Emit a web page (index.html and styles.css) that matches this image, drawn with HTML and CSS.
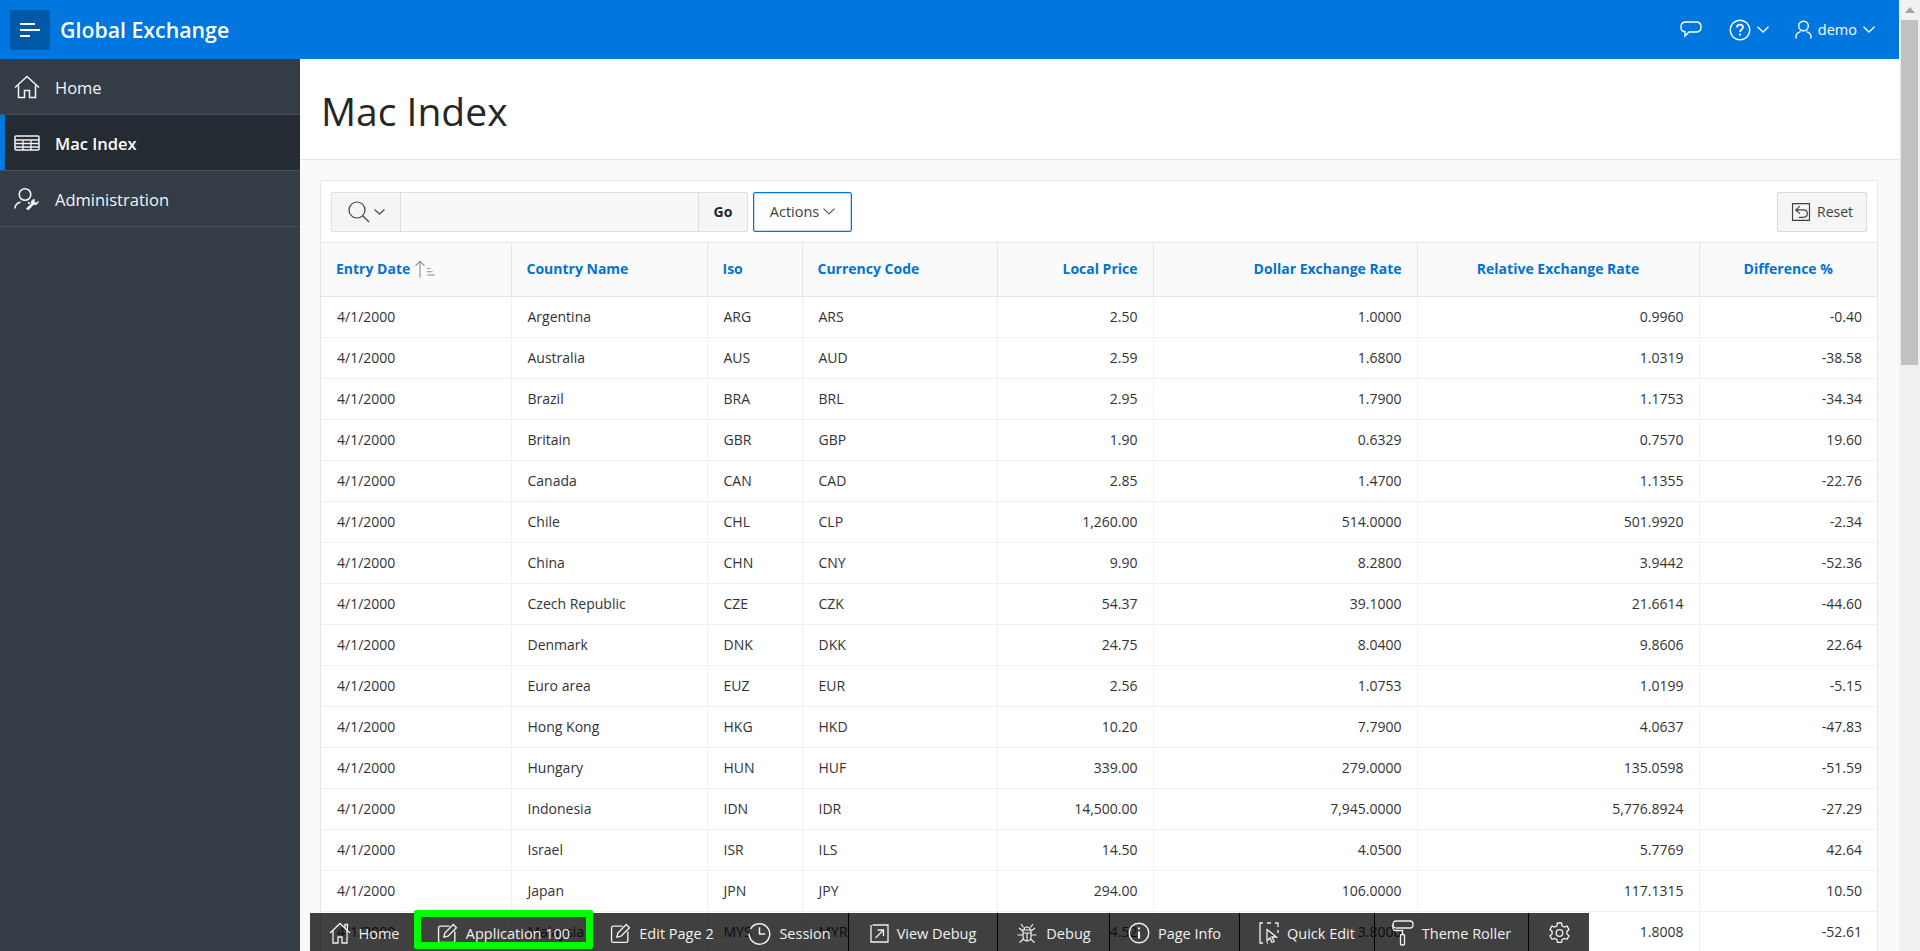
FILE: index.html
```html
<!DOCTYPE html>
<html lang="en">
<head>
    <meta charset="UTF-8">
    <meta name="viewport" content="width=device-width, initial-scale=1.0">
    <title>Mac Index</title>
    <link rel="stylesheet" href="styles.css">
</head>
<body>
<div class="viewport">
    <div class="app">
        <header class="topbar">
            <div class="topbar__left">
                <button class="menu-btn">
                    <svg width="20" height="14" viewBox="0 0 20 14" fill="none" stroke="#fff" stroke-width="2"><path d="M0 1h15M0 7h20M0 13h10"/></svg>
                </button>
                <span class="brand">Global Exchange</span>
            </div>
            <div class="topbar__right">
                <svg class="top-chat" width="22" height="20" viewBox="0 0 22 20" fill="none" stroke="#fff" stroke-width="1.4"><path d="M6 2h10c3 0 5 1.500 5 4.500v1c0 3-2 4.500-5 4.500H9l-4 4v-4.200C2.500 11.500 1 10 1 7.500v-1C1 3.500 3 2 6 2z"/></svg>
                <span class="top-group top-group--help">
                    <svg width="22" height="22" viewBox="0 0 22 22" fill="none" stroke="#fff" stroke-width="1.400"><circle cx="11" cy="11" r="9.800"/><path d="M8 8.500C8 6.700 9.300 5.700 11 5.700s3 1 3 2.600c0 2.200-3 2.300-3 4.700" stroke-width="1.800"/><path d="M11 14.600v2" stroke-width="1.900"/></svg>
                    <svg width="12" height="7" viewBox="0 0 12 7" fill="none" stroke="#fff" stroke-width="1.300"><path d="M.5.7 6 6l5.500-5.300"/></svg>
                </span>
                <span class="top-group top-group--user">
                    <svg width="17" height="19" viewBox="0 0 17 19" fill="none" stroke="#fff" stroke-width="1.400"><circle cx="8.500" cy="6" r="4.800"/><path d="M1 18.500v-2c0-2.500 2-4 4.500-4.800M16 18.500v-2c0-2.500-2-4-4.500-4.800"/></svg>
                    <span class="top-user">demo</span>
                    <svg width="12" height="7" viewBox="0 0 12 7" fill="none" stroke="#fff" stroke-width="1.300"><path d="M.5.7 6 6l5.500-5.300"/></svg>
                </span>
            </div>
        </header>

        <div class="body-wrap">
            <nav class="sidenav">
                <a class="nav-item">
                    <svg width="26" height="24" viewBox="0 0 26 24" fill="none" stroke="#f2f4f5" stroke-width="1.500"><path d="M1 12.500 13 1.500l12 11M4.500 10.500V22.500h6v-7h5v7h6V10.500"/></svg>
                    <span>Home</span>
                </a>
                <a class="nav-item nav-item--active">
                    <svg width="26" height="16" viewBox="0 0 26 16" fill="none" stroke="#f2f4f5" stroke-width="1.500"><rect x="1" y="1" width="24" height="14" rx="1"/><path d="M1 5h24M1 8.500h24M1 12h24M9 5v10M17 5v10" stroke-width="1.300"/></svg>
                    <span>Mac Index</span>
                </a>
                <a class="nav-item">
                    <svg width="26" height="24" viewBox="0 0 26 24" fill="none" stroke="#f2f4f5" stroke-width="1.500"><circle cx="11" cy="7.500" r="5.800"/><path d="M1 21.500c0-3 2-5.500 5.500-6.500M14 15.500l2 1"/><path d="M14.500 22.800l5-5.300c2 .8 4.500-.5 5-3l-2.500 1.500-2-1 .4-2.600c-2.400.2-3.800 2-3 4.300l-5 5z" fill="#f2f4f5" stroke-width=".8"/></svg>
                    <span>Administration</span>
                </a>
            </nav>

            <main class="content">
                <div class="page-head">
                    <h1>Mac Index</h1>
                </div>
                <div class="page-body">
                    <section class="report">
                        <div class="report__toolbar">
                            <div class="search-group">
                                <button class="search-btn">
                                    <svg width="22" height="22" viewBox="0 0 22 22" fill="none" stroke="#404040" stroke-width="1.200"><circle cx="9" cy="9" r="8"/><path d="m15 15 6 6"/></svg>
                                    <svg width="11" height="6" viewBox="0 0 11 6" fill="none" stroke="#404040" stroke-width="1.100"><path d="M.5.500 5.500 5l5-4.500"/></svg>
                                </button>
                                <div class="search-input"></div>
                                <button class="go-btn">Go</button>
                            </div>
                            <button class="actions-btn">Actions
                                <svg width="12" height="7" viewBox="0 0 13 7" fill="none" stroke="#404040" stroke-width="1.100"><path d="M.5.500 6.500 6l6-5.500"/></svg>
                            </button>
                            <button class="reset-btn">
                                <svg width="20" height="18" viewBox="0 0 18 17" fill="none" stroke="#404040" stroke-width="1.100"><path d="M2 .6h15v15.800H1V.6z"/><path d="M8 3 4 6.500 8 10M4 6.500h7c3 0 4 2 4 3.500s-1 3.500-4 3.500H7"/></svg>
                                Reset
                            </button>
                        </div>
                        <table class="grid">
                            <colgroup>
                                <col class="c-date"><col class="c-country"><col class="c-iso"><col class="c-code"><col class="c-price"><col class="c-rate"><col class="c-rel"><col class="c-diff">
                            </colgroup>
                            <thead>
                                <tr>
                                    <th>Entry Date
                                        <svg class="sort-icon" width="22" height="18" viewBox="0 0 20 16" fill="none" stroke="#8c8c8c" stroke-width="1"><path d="M5.500 16V1M1.500 5l4-4 4 4"/><path d="M12 7.500h3M12 10.500h5M12 13.500h7" stroke-width="1"/></svg>
                                    </th>
                                    <th>Country Name</th>
                                    <th>Iso</th>
                                    <th>Currency Code</th>
                                    <th class="right">Local Price</th>
                                    <th class="right">Dollar Exchange Rate</th>
                                    <th class="center">Relative Exchange Rate</th>
                                    <th class="center">Difference %</th>
                                </tr>
                            </thead>
                            <tbody>
                                <tr><td>4/1/2000</td><td>Argentina</td><td>ARG</td><td>ARS</td><td class="right">2.50</td><td class="right">1.0000</td><td class="right">0.9960</td><td class="right">-0.40</td></tr>
                                <tr><td>4/1/2000</td><td>Australia</td><td>AUS</td><td>AUD</td><td class="right">2.59</td><td class="right">1.6800</td><td class="right">1.0319</td><td class="right">-38.58</td></tr>
                                <tr><td>4/1/2000</td><td>Brazil</td><td>BRA</td><td>BRL</td><td class="right">2.95</td><td class="right">1.7900</td><td class="right">1.1753</td><td class="right">-34.34</td></tr>
                                <tr><td>4/1/2000</td><td>Britain</td><td>GBR</td><td>GBP</td><td class="right">1.90</td><td class="right">0.6329</td><td class="right">0.7570</td><td class="right">19.60</td></tr>
                                <tr><td>4/1/2000</td><td>Canada</td><td>CAN</td><td>CAD</td><td class="right">2.85</td><td class="right">1.4700</td><td class="right">1.1355</td><td class="right">-22.76</td></tr>
                                <tr><td>4/1/2000</td><td>Chile</td><td>CHL</td><td>CLP</td><td class="right">1,260.00</td><td class="right">514.0000</td><td class="right">501.9920</td><td class="right">-2.34</td></tr>
                                <tr><td>4/1/2000</td><td>China</td><td>CHN</td><td>CNY</td><td class="right">9.90</td><td class="right">8.2800</td><td class="right">3.9442</td><td class="right">-52.36</td></tr>
                                <tr><td>4/1/2000</td><td>Czech Republic</td><td>CZE</td><td>CZK</td><td class="right">54.37</td><td class="right">39.1000</td><td class="right">21.6614</td><td class="right">-44.60</td></tr>
                                <tr><td>4/1/2000</td><td>Denmark</td><td>DNK</td><td>DKK</td><td class="right">24.75</td><td class="right">8.0400</td><td class="right">9.8606</td><td class="right">22.64</td></tr>
                                <tr><td>4/1/2000</td><td>Euro area</td><td>EUZ</td><td>EUR</td><td class="right">2.56</td><td class="right">1.0753</td><td class="right">1.0199</td><td class="right">-5.15</td></tr>
                                <tr><td>4/1/2000</td><td>Hong Kong</td><td>HKG</td><td>HKD</td><td class="right">10.20</td><td class="right">7.7900</td><td class="right">4.0637</td><td class="right">-47.83</td></tr>
                                <tr><td>4/1/2000</td><td>Hungary</td><td>HUN</td><td>HUF</td><td class="right">339.00</td><td class="right">279.0000</td><td class="right">135.0598</td><td class="right">-51.59</td></tr>
                                <tr><td>4/1/2000</td><td>Indonesia</td><td>IDN</td><td>IDR</td><td class="right">14,500.00</td><td class="right">7,945.0000</td><td class="right">5,776.8924</td><td class="right">-27.29</td></tr>
                                <tr><td>4/1/2000</td><td>Israel</td><td>ISR</td><td>ILS</td><td class="right">14.50</td><td class="right">4.0500</td><td class="right">5.7769</td><td class="right">42.64</td></tr>
                                <tr><td>4/1/2000</td><td>Japan</td><td>JPN</td><td>JPY</td><td class="right">294.00</td><td class="right">106.0000</td><td class="right">117.1315</td><td class="right">10.50</td></tr>
                                <tr><td>4/1/2000</td><td>Malaysia</td><td>MYS</td><td>MYR</td><td class="right">4.52</td><td class="right">3.8000</td><td class="right">1.8008</td><td class="right">-52.61</td></tr>
                            </tbody>
                        </table>
                    </section>
                </div>
            </main>
        </div>

        <div class="devbar">
            <a class="dev-item dev-home">
                <svg width="22" height="22" viewBox="0 0 22 22" fill="none" stroke="#f0f0f0" stroke-width="1.300"><path d="M1 11 11 1.500 21 11M4 8.500V21h5v-6h4v6h5V8.500M16 6V2.500h2.500v6"/></svg>Home
            </a>
            <a class="dev-item dev-app">
                <svg width="21" height="21" viewBox="0 0 20 20" fill="none" stroke="#f0f0f0" stroke-width="1.300"><path d="M12 3H3a1.500 1.500 0 0 0-1.500 1.500v12.500a1.500 1.500 0 0 0 1.500 1.500h12.500a1.500 1.500 0 0 0 1.500-1.500V8"/><path d="M6.500 13.500l1-4L15.500 1.500l3 3-8 8z"/></svg>Application 100
                <span class="dev-highlight"></span>
            </a>
            <a class="dev-item dev-edit">
                <svg width="21" height="21" viewBox="0 0 20 20" fill="none" stroke="#f0f0f0" stroke-width="1.300"><path d="M12 3H3a1.500 1.500 0 0 0-1.500 1.500v12.500a1.500 1.500 0 0 0 1.500 1.500h12.500a1.500 1.500 0 0 0 1.500-1.500V8"/><path d="M6.500 13.500l1-4L15.500 1.500l3 3-8 8z"/></svg>Edit Page 2
            </a>
            <a class="dev-item dev-session">
                <svg width="23" height="23" viewBox="0 0 22 22" fill="none" stroke="#f0f0f0" stroke-width="1.400"><path d="M2.500 6.500A9.800 9.800 0 1 1 1.200 11"/><path d="M11 5v6.500h5.500"/></svg>Session
            </a>
            <a class="dev-item dev-view">
                <svg width="19" height="19" viewBox="0 0 19 19" fill="none" stroke="#f0f0f0" stroke-width="1.300"><path d="M2.500 1H18v17H1V1"/><path d="M5.500 14 13 6.500M7.500 6H13.500v6"/></svg>View Debug
            </a>
            <a class="dev-item dev-debug">
                <svg width="22" height="22" viewBox="0 0 22 22" fill="none" stroke="#f0f0f0" stroke-width="1.200"><path d="M7 8h8v7a4 4 0 0 1-8 0zM8 8c0-2 1.300-3 3-3s3 1 3 3M7 11h8M11 11v8M7.500 5.500 5 2M14.500 5.500 17 2M7 9 3 6M15 9l4-3M7 13H1.500M15 13h5.500M7.500 17 3.500 20.500M14.500 17l4 3.500"/></svg>Debug
            </a>
            <a class="dev-item dev-info">
                <svg width="22" height="22" viewBox="0 0 22 22" fill="none" stroke="#f0f0f0" stroke-width="1.400"><circle cx="11" cy="11" r="9.800"/><path d="M11 9.500v7" stroke-width="2"/><path d="M11 5.500v2" stroke-width="2"/></svg>Page Info
            </a>
            <a class="dev-item dev-quick">
                <svg width="20" height="22" viewBox="0 0 20 22" fill="none" stroke="#f0f0f0" stroke-width="1.300"><path d="M4 1H1v20h3M8 1h4M16 1h3v4M19 8v3M8 21h1"/><path d="M8 7.500 8 19l3-3 2 4.500 2.200-1L13 15h4.500z"/></svg>Quick Edit
            </a>
            <a class="dev-item dev-theme">
                <svg width="22" height="26" viewBox="0 0 22 26" fill="none" stroke="#f0f0f0" stroke-width="1.300"><rect x="1" y="1" width="20" height="7" rx="3"/><path d="M1 4.500c-.5 3 0 6 2 6h7.500v4"/><rect x="8.500" y="14.500" width="4" height="10.500" rx="1"/></svg>Theme Roller
            </a>
            <a class="dev-item dev-gear">
                <svg width="21" height="22" viewBox="0 0 21 22" fill="none" stroke="#f0f0f0" stroke-width="1.300"><circle cx="10.500" cy="11" r="3.300"/><path d="M8.500 1h4l.6 2.800 2.200 1.200 2.700-.9 2 3.400-2.100 1.900v2.500l2.100 2-2 3.400-2.700-.9-2.200 1.200-.6 2.800h-4l-.6-2.800-2.200-1.200-2.700.9-2-3.400 2.100-2V9.400L1 7.500l2-3.400 2.700.9L7.900 3.800z"/></svg>
            </a>
        </div>
    </div>

    <div class="scrollbar">
        <span class="scrollbar__arrow"></span>
        <div class="scrollbar__thumb"></div>
    </div>
</div>
</body>
</html>
```

FILE: styles.css
```css
*{
    box-sizing: border-box;
    padding: 0;margin: 0;
}
html, body{
    height: 100%;
    overflow: hidden;
}
body{
    font-family: "Open Sans", "Noto Sans", "DejaVu Sans", sans-serif;
    font-size: 14px;
    color: #262626;
    background: #fff;
}
button{
    font-family: inherit;
    cursor: pointer;
}
.viewport{
    display: flex;
    height: 951px;
}
.app{
    position: relative;
    flex: 1;
    min-width: 0;
    display: flex;
    flex-direction: column;
    overflow: hidden;
}

/* top bar */
.topbar{
    flex: 0 0 59px;
    display: flex;
    align-items: center;
    justify-content: space-between;
    background: #0076df;
    color: #fff;
    padding: 0 24px 0 10px;
}
.topbar__left{
    display: flex;
    align-items: center;
    gap: 10px;
}
.menu-btn{
    width: 40px;
    height: 40px;
    display: flex;
    align-items: center;
    justify-content: center;
    background: #0059a8;
    border: none;
    border-radius: 2px;
}
.brand{
    font-size: 21.300px;
    font-weight: 600;
}
.topbar__right{
    display: flex;
    align-items: center;
}
.top-chat{
    margin-right: 27px;
}
.top-group{
    display: flex;
    align-items: center;
}
.top-group--help{
    gap: 6px;
    margin-right: 26px;
}
.top-group--user{
    gap: 6px;
}
.top-user{
    font-size: 14.500px;
}

/* side nav */
.body-wrap{
    flex: 1;
    display: flex;
    min-height: 0;
}
.sidenav{
    flex: 0 0 300px;
    background: #343d46;
}
.nav-item{
    height: 56px;
    display: flex;
    align-items: center;
    gap: 15px;
    padding: 1px 14px 0;
    color: #f2f4f5;
    font-size: 16.500px;
    border-bottom: 1px solid #44505a;
}
.nav-item--active{
    background: #252b32;
    font-weight: 600;
    box-shadow: inset 5px 0 0 #0076df;
    color: #fff;
}

/* page */
.content{
    flex: 1;
    min-width: 0;
    display: flex;
    flex-direction: column;
}
.page-head{
    flex: 0 0 101px;
    display: flex;
    align-items: center;
    padding: 3px 21px 0;
    border-bottom: 1px solid #e6e6e6;
}
.page-head h1{
    font-size: 39px;
    font-weight: 400;
    color: #262626;
}
.page-body{
    flex: 1;
    background: #fafafa;
    padding: 20px 21px 0 20px;
}
.report{
    background: #fff;
    border: 1px solid #e6e6e6;
    border-radius: 2px;
}
.report__toolbar{
    display: flex;
    align-items: center;
    height: 61px;
    padding: 0 10px;
    gap: 5px;
}
.search-group{
    display: flex;
    width: 417px;
    height: 40px;
    background: #f5f5f5;
    border: 1px solid #dfdfdf;
    border-radius: 2px;
}
.search-btn{
    width: 69px;
    display: flex;
    align-items: center;
    justify-content: center;
    gap: 4px;
    background: #f5f5f5;
    border: none;
    border-right: 1px solid #dfdfdf;
}
.search-input{
    flex: 1;
    background: #f8f8f8;
}
.go-btn{
    width: 49px;
    background: #f5f5f5;
    border: none;
    border-left: 1px solid #dfdfdf;
    font-size: 14px;
    font-weight: 700;
    color: #262626;
}
.actions-btn{
    width: 99px;
    height: 40px;
    display: flex;
    align-items: center;
    justify-content: center;
    gap: 4px;
    background: #fff;
    border: 1px solid #0076df;
    box-shadow: inset 0 0 0 1px #bcdcf7;
    border-radius: 2px;
    font-size: 14.500px;
    color: #404040;
}
.reset-btn{
    margin-left: auto;
    width: 90px;
    height: 40px;
    display: flex;
    align-items: center;
    justify-content: center;
    gap: 6px;
    background: #f5f5f5;
    border: 1px solid #d9d9d9;
    border-radius: 2px;
    font-size: 14px;
    color: #404040;
}

/* report grid */
.grid{
    width: 100%;
    border-collapse: collapse;
    table-layout: fixed;
}
.c-date{width: 190px;}
.c-country{width: 196px;}
.c-iso{width: 95px;}
.c-code{width: 195px;}
.c-price{width: 156px;}
.c-rate{width: 264px;}
.c-rel{width: 282px;}
.grid th{
    height: 54px;
    background: #fafafa;
    border-top: 1px solid #e6e6e6;
    border-right: 1px solid #e6e6e6;
    border-bottom: 1px solid #e6e6e6;
    color: #0572ce;
    font-size: 14px;
    font-weight: 700;
    text-align: left;
    padding: 0 15px 2px;
    white-space: nowrap;
}
.grid td{
    height: 41px;
    border-right: 1px solid #f0f0f0;
    border-bottom: 1px solid #f0f0f0;
    font-size: 14px;
    color: #333;
    padding: 0 15px 2px 16px;
    white-space: nowrap;
}
.grid th:last-child, .grid td:last-child{
    border-right: none;
}
.grid .right{
    text-align: right;
}
.grid .center{
    text-align: center;
}
.sort-icon{
    vertical-align: -4px;
}

/* developer toolbar, floats over the report */
.devbar{
    position: absolute;
    left: 310px;
    bottom: 0;
    height: 38px;
    width: 1279px;
    display: flex;
    background: rgba(0, 0, 0, .75);
}
.dev-item{
    position: relative;
    display: flex;
    align-items: center;
    justify-content: center;
    gap: 8px;
    height: 100%;
    padding-top: 2px;
    border-right: 1px solid #000;
    color: #f0f0f0;
    font-size: 14.500px;
    white-space: nowrap;
}
.dev-home{width: 104px; padding-left: 4px;}
.dev-app{width: 179px;}
.dev-edit{width: 138px;}
.dev-session{width: 118px;}
.dev-view{width: 149px;}
.dev-debug{width: 112px;}
.dev-info{width: 130px;}
.dev-quick{width: 135px;}
.dev-theme{width: 154px;}
.dev-gear{width: 60px; border-right: none;}
.dev-home, .dev-app, .dev-edit{
    border-right: none;
}
.dev-highlight{
    position: absolute;
    top: -3px;
    left: 0;
    right: 0;
    bottom: 2px;
    border: 7px solid #00ff00;
    border-radius: 2px;
}

/* scrollbar */
.scrollbar{
    flex: 0 0 21px;
    background: #f1f1f1;
    padding: 0 2px;
    position: relative;
}
.scrollbar__arrow{
    display: block;
    width: 0;
    height: 0;
    margin: 7px auto 0;
    border-left: 5px solid transparent;
    border-right: 5px solid transparent;
    border-bottom: 6px solid #a3a3a3;
}
.scrollbar__thumb{
    margin-top: 7px;
    height: 345px;
    background: #c1c1c1;
}
```
